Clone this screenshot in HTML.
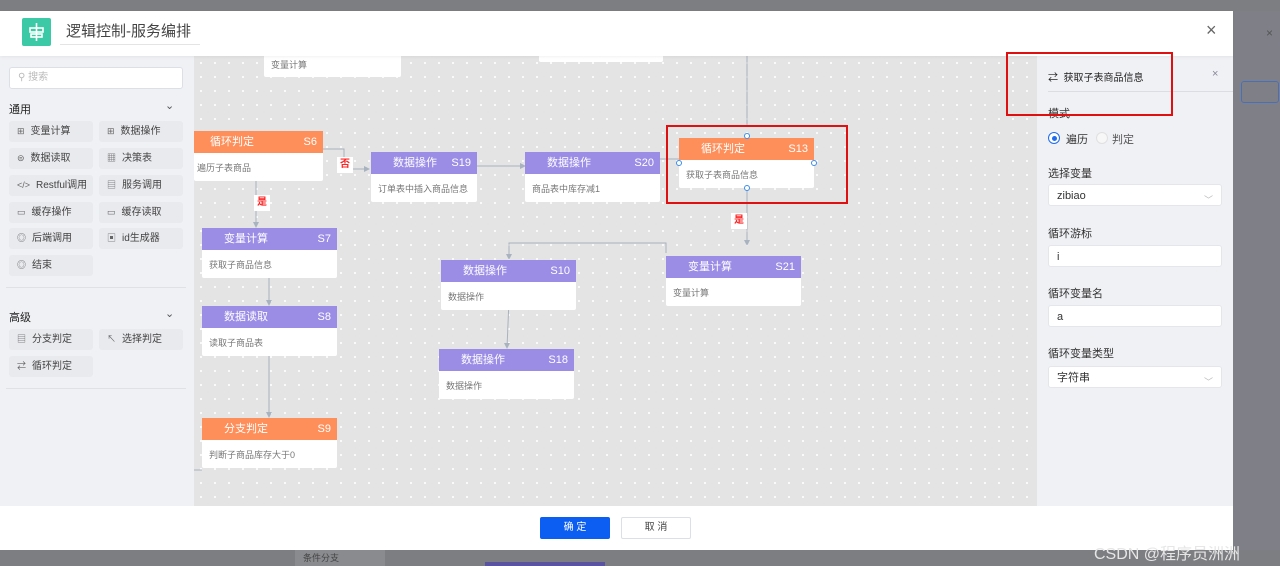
<!DOCTYPE html>
<html><head><meta charset="utf-8"><style>
*{box-sizing:border-box;margin:0;padding:0}
body{width:1280px;height:566px;overflow:hidden;background:#7d7e82;font-family:"Liberation Sans","Noto Sans CJK SC",sans-serif;position:relative;font-size:12px;color:#333}
.a{position:absolute}
#modal{left:0;top:11px;width:1233px;height:539px;background:#fff}
#hdr{left:0;top:0;width:1233px;height:45px;background:#fff;z-index:5;box-shadow:0 1px 3px rgba(0,0,0,.06)}
#left{left:0;top:45px;width:194px;height:450px;background:#f0f1f4}
#canvas{left:194px;top:45px;width:843px;height:450px;background-color:#e4e4e4;background-image:radial-gradient(#fff 0.8px,transparent 1.2px);background-size:14px 14px;overflow:hidden}
#right{left:1037px;top:45px;width:196px;height:450px;background:#f0f1f5}
.item{position:absolute;width:84px;height:21px;background:#e9eaee;border-radius:3px;font-size:10px;color:#444;line-height:21px;padding-left:8px}
.item i{font-style:normal;font-size:9px;color:#666;margin-right:6px}
.node{position:absolute;width:135px;height:50px;background:#fff;border-radius:2px}
.node .h{height:22px;line-height:22px;color:#fff;font-size:11px;padding:0 6px 0 22px;display:flex;justify-content:space-between}
.node .b{font-size:9px;color:#777;padding:8px 7px}
.p .h{background:#9b8ce5}.o .h{background:#ff8f5a}
.lbl{position:absolute;background:#fff;color:#f22;font-size:10px;width:16px;height:16px;text-align:center;line-height:16px;font-weight:bold}
.inp{position:absolute;left:11px;width:174px;height:22px;background:#fff;border-radius:3px;font-size:11px;padding-left:8px;line-height:22px;color:#333;border:1px solid #e4e6eb}
.lab{position:absolute;left:11px;font-size:11px;color:#333}
.chev{position:absolute;right:8px;top:4px;color:#bbb;font-size:9px}
</style></head><body>
<div class="a" style="left:1233px;top:11px;width:47px;height:539px;background:#7f8087"></div>
<div class="a" style="left:1241px;top:81px;width:38px;height:22px;border:1px solid #4a6fb8;border-radius:3px"></div>
<div class="a" style="left:1266px;top:26px;color:#555;font-size:12px">×</div>
<div class="a" style="left:1094px;top:540px;color:#e6e6e6;font-size:16px;z-index:20">CSDN @程序员洲洲</div>
<div class="a" style="left:295px;top:548px;width:90px;height:18px;background:#8a8b8f;color:#444;font-size:9px;padding:3px 8px">条件分支</div>
<div class="a" style="left:485px;top:562px;width:120px;height:4px;background:#5a54a0"></div>
<div class="a" id="modal">
 <div class="a" id="hdr">
  <div class="a" style="left:22px;top:7px;width:29px;height:28px;background:#3cc9a5;border-radius:2px"><svg width="29" height="28"><g stroke="#fff" stroke-width="1.6" fill="none"><line x1="14.5" y1="5" x2="14.5" y2="23"/><rect x="8" y="10" width="13" height="4"/><rect x="9" y="16" width="11" height="3"/></g></svg></div>
  <div class="a" style="left:60px;top:8px;width:140px;height:26px;border-bottom:1px solid #e4e4e4;font-size:15px;color:#444;padding-left:6px;line-height:26px">逻辑控制-服务编排</div>
  <div class="a" style="left:1206px;top:9px;font-size:18px;color:#666">×</div>
 </div>
 <div class="a" id="left">
  <div class="a" style="left:9px;top:11px;width:174px;height:22px;background:#fff;border:1px solid #dcdfe6;border-radius:3px;font-size:10px;color:#bbb;line-height:20px;padding-left:8px">⚲ 搜索</div>
  <div class="a" style="left:9px;top:45px;font-size:11px;color:#222">通用</div><div class="a" style="left:165px;top:43px;font-size:11px;color:#555">⌄</div>
  <div class="item" style="left:9px;top:65px"><i>⊞</i>变量计算</div><div class="item" style="left:99px;top:65px"><i>⊞</i>数据操作</div>
  <div class="item" style="left:9px;top:92px"><i>⊜</i>数据读取</div><div class="item" style="left:99px;top:92px"><i>▦</i>决策表</div>
  <div class="item" style="left:9px;top:119px"><i>&lt;/&gt;</i>Restful调用</div><div class="item" style="left:99px;top:119px"><i>▤</i>服务调用</div>
  <div class="item" style="left:9px;top:146px"><i>▭</i>缓存操作</div><div class="item" style="left:99px;top:146px"><i>▭</i>缓存读取</div>
  <div class="item" style="left:9px;top:172px"><i>◎</i>后端调用</div><div class="item" style="left:99px;top:172px"><i>▣</i>id生成器</div>
  <div class="item" style="left:9px;top:199px"><i>◎</i>结束</div>
  <div class="a" style="left:6px;top:231px;width:180px;height:1px;background:#e0e1e5"></div>
  <div class="a" style="left:9px;top:253px;font-size:11px;color:#222">高级</div><div class="a" style="left:165px;top:251px;font-size:11px;color:#555">⌄</div>
  <div class="item" style="left:9px;top:273px"><i>▤</i>分支判定</div><div class="item" style="left:99px;top:273px"><i>↖</i>选择判定</div>
  <div class="item" style="left:9px;top:300px"><i>⇄</i>循环判定</div>
  <div class="a" style="left:6px;top:332px;width:180px;height:1px;background:#e0e1e5"></div>
 </div>
 <div class="a" id="canvas"><div class="a" style="left:0;top:-11px;width:843px;height:470px">
  <svg class="a" style="left:0;top:0" width="843" height="470"><g stroke="#a9b2bf" stroke-width="1" fill="none">
   <line x1="553" y1="0" x2="553" y2="82"/><line x1="553" y1="132" x2="553" y2="200"/>
   <path d="M129 104 H150 V124 H175"/><path d="M283 121 H331"/><path d="M466 114 H485"/>
   <line x1="62" y1="126" x2="62" y2="182"/><line x1="75" y1="222" x2="75" y2="260"/><line x1="75" y1="300" x2="75" y2="372"/>
   <path d="M472 208 V198 H315 V214"/><line x1="315" y1="255" x2="313" y2="303"/>
   <path d="M0 425 H8"/>
  </g>
  <g fill="#a9b2bf"><path d="M59 177 L62 183 L65 177Z"/><path d="M72 255 L75 261 L78 255Z"/><path d="M72 367 L75 373 L78 367Z"/><path d="M170 121 L176 124 L170 127Z"/><path d="M326 118 L332 121 L326 124Z"/><path d="M550 195 L553 201 L556 195Z"/><path d="M312 209 L315 215 L318 209Z"/><path d="M310 298 L313 304 L316 298Z"/></g></svg>
  <div class="node" style="left:70px;top:-13px;width:137px;height:45px"><div class="b" style="padding-top:26px">变量计算</div></div>
  <div class="node" style="left:345px;top:-13px;width:124px;height:30px"></div>
  <div class="node o" style="left:0;top:86px;width:129px"><div class="h" style="padding-left:16px"><span>循环判定</span><span>S6</span></div><div class="b" style="padding-left:3px">遍历子表商品</div></div>
  <div class="lbl" style="left:143px;top:112px">否</div>
  <div class="lbl" style="left:60px;top:150px">是</div>
  <div class="node p" style="left:177px;top:107px;width:106px"><div class="h"><span>数据操作</span><span>S19</span></div><div class="b">订单表中插入商品信息</div></div>
  <div class="node p" style="left:331px;top:107px"><div class="h"><span>数据操作</span><span>S20</span></div><div class="b">商品表中库存减1</div></div>
  <div class="node o" style="left:485px;top:93px"><div class="h"><span>循环判定</span><span>S13</span></div><div class="b">获取子表商品信息</div></div>
  <div class="a" style="left:472px;top:80px;width:182px;height:79px;border:2px solid #e01010"></div>
  <div class="a" style="left:550px;top:88px;width:6px;height:6px;border:1px solid #3b8cf0;border-radius:50%;background:#fff"></div>
  <div class="a" style="left:550px;top:140px;width:6px;height:6px;border:1px solid #3b8cf0;border-radius:50%;background:#fff"></div>
  <div class="a" style="left:482px;top:115px;width:6px;height:6px;border:1px solid #3b8cf0;border-radius:50%;background:#fff"></div>
  <div class="a" style="left:617px;top:115px;width:6px;height:6px;border:1px solid #3b8cf0;border-radius:50%;background:#fff"></div>
  <div class="lbl" style="left:537px;top:168px">是</div>
  <div class="node p" style="left:8px;top:183px"><div class="h"><span>变量计算</span><span>S7</span></div><div class="b">获取子商品信息</div></div>
  <div class="node p" style="left:8px;top:261px"><div class="h"><span>数据读取</span><span>S8</span></div><div class="b">读取子商品表</div></div>
  <div class="node o" style="left:8px;top:373px"><div class="h"><span>分支判定</span><span>S9</span></div><div class="b">判断子商品库存大于0</div></div>
  <div class="node p" style="left:247px;top:215px"><div class="h"><span>数据操作</span><span>S10</span></div><div class="b">数据操作</div></div>
  <div class="node p" style="left:245px;top:304px"><div class="h"><span>数据操作</span><span>S18</span></div><div class="b">数据操作</div></div>
  <div class="node p" style="left:472px;top:211px"><div class="h"><span>变量计算</span><span>S21</span></div><div class="b">变量计算</div></div>
 </div></div>
 <div class="a" id="right">
  <div class="a" style="left:11px;top:13px;font-size:10px;color:#222">⇄ &nbsp;获取子表商品信息</div>
  <div class="a" style="left:175px;top:12px;font-size:11px;color:#889">×</div>
  <div class="a" style="left:11px;top:35px;width:185px;height:1px;background:#dcdde2"></div>
  <div class="lab" style="top:49px">模式</div>
  <div class="a" style="left:11px;top:76px;width:12px;height:12px;border:1px solid #1f6cf0;border-radius:50%;background:#fff"><div style="margin:2.5px;width:5px;height:5px;border-radius:50%;background:#1f6cf0"></div></div>
  <div class="a" style="left:29px;top:75px;font-size:11px">遍历</div>
  <div class="a" style="left:59px;top:76px;width:12px;height:12px;border:1px solid #e0e0e0;border-radius:50%;background:#f7f7f7"></div>
  <div class="a" style="left:75px;top:75px;font-size:11px;color:#555">判定</div>
  <div class="lab" style="top:109px">选择变量</div>
  <div class="inp" style="top:128px">zibiao<span class="chev">﹀</span></div>
  <div class="lab" style="top:169px">循环游标</div>
  <div class="inp" style="top:189px">i</div>
  <div class="lab" style="top:229px">循环变量名</div>
  <div class="inp" style="top:249px">a</div>
  <div class="lab" style="top:289px">循环变量类型</div>
  <div class="inp" style="top:310px">字符串<span class="chev">﹀</span></div>
 </div>
 <div class="a" style="left:540px;top:506px;width:70px;height:22px;background:#0c5ef3;border-radius:2px;color:#fff;font-size:10px;text-align:center;line-height:22px">确 定</div>
 <div class="a" style="left:621px;top:506px;width:70px;height:22px;border:1px solid #dcdfe6;border-radius:2px;color:#444;font-size:10px;text-align:center;line-height:20px">取 消</div>
</div>
<div class="a" style="left:1006px;top:52px;width:167px;height:64px;border:2px solid #e01010;z-index:10"></div>
</body></html>
